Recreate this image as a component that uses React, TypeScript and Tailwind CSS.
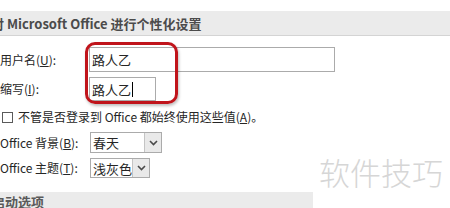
export default function App() {
  const font = { fontFamily: '"Noto Sans CJK SC", "Noto Sans", sans-serif' };

  const Chevron = () => (
    <svg width="9" height="6" viewBox="0 0 9 6" className="block">
      <path d="M1 1 L4.5 4.5 L8 1" fill="none" stroke="#4a4a4a" strokeWidth="1.6" />
    </svg>
  );

  return (
    <div
      className="relative w-[450px] h-[208px] overflow-hidden bg-white text-[12px] text-[#262626]"
      style={font}
    >
      <div className="h-[11px]" />

      {/* section header */}
      <div className="h-[25px] bg-[#ebebeb] border-b border-[#d4d4d4] flex items-center">
        <span className="ml-[-9px] text-[13px] font-bold text-[#4b4b4b] leading-none whitespace-nowrap">
          对 Microsoft Office 进行个性化设置
        </span>
      </div>

      <div className="flex flex-col">
        {/* user name */}
        <div className="mt-[11px] h-[25px] flex items-center">
          <span className="w-[89px] leading-none">
            用户名(<span className="underline">U</span>):
          </span>
          <div className="w-[246px] h-[25px] border border-[#ababab] flex items-center pl-[2px] text-[13px] leading-none">
            路人乙
          </div>
        </div>

        {/* initials */}
        <div className="mt-[5px] h-[24px] flex items-center">
          <span className="w-[89px] leading-none">
            缩写(<span className="underline">I</span>):
          </span>
          <div className="w-[67px] h-[24px] border border-[#ababab] flex items-center pl-[2px] text-[13px] leading-none">
            路人乙
            <span className="ml-[1px] w-[1px] h-[15px] bg-black" />
          </div>
        </div>

        {/* checkbox */}
        <div className="mt-[8px] h-[16px] flex items-center">
          <span className="ml-[2px] w-[11px] h-[11px] border border-[#5a5a5a] bg-white" />
          <span className="ml-[5px] leading-none whitespace-nowrap">
            不管是否登录到 Office 都始终使用这些值(<span className="underline">A</span>)。
          </span>
        </div>

        {/* background */}
        <div className="mt-[7px] h-[21px] flex items-center">
          <span className="w-[90px] leading-none whitespace-nowrap">
            Office 背景(<span className="underline">B</span>):
          </span>
          <div className="w-[72px] h-[21px] border border-[#ababab] flex">
            <span className="flex-1 flex items-center pl-[2px] text-[13px] leading-none">春天</span>
            <span className="w-[17px] border-l border-[#c4c4c4] bg-[#e9e9e9] flex items-center justify-center">
              <Chevron />
            </span>
          </div>
        </div>

        {/* theme */}
        <div className="mt-[5px] h-[20px] flex items-center">
          <span className="w-[90px] leading-none whitespace-nowrap">
            Office 主题(<span className="underline">T</span>):
          </span>
          <div className="w-[60px] h-[20px] border border-[#ababab] flex">
            <span className="flex-1 flex items-center pl-[2px] text-[13px] leading-none whitespace-nowrap">浅灰色</span>
            <span className="w-[17px] border-l border-[#c4c4c4] bg-[#e9e9e9] flex items-center justify-center">
              <Chevron />
            </span>
          </div>
        </div>

        {/* next section header */}
        <div className="mt-[14px] w-[313px] h-[25px] bg-[#ebebeb] flex items-center">
          <span className="ml-[-8px] mt-[-6px] text-[13px] font-bold text-[#5a5a5a] leading-none whitespace-nowrap">
            启动选项
          </span>
        </div>
      </div>

      {/* red highlight */}
      <div className="absolute left-[85px] top-[42px] w-[93px] h-[62px] rounded-[10px] border-[3px] border-[#c0141b] shadow-[1px_2px_3px_rgba(0,0,0,0.25)]" />

      {/* watermark */}
      <div className="absolute left-[319px] top-[156px] text-[31px] font-light leading-none text-[#d6d6d6] whitespace-nowrap">
        软件技巧
      </div>
    </div>
  );
}
